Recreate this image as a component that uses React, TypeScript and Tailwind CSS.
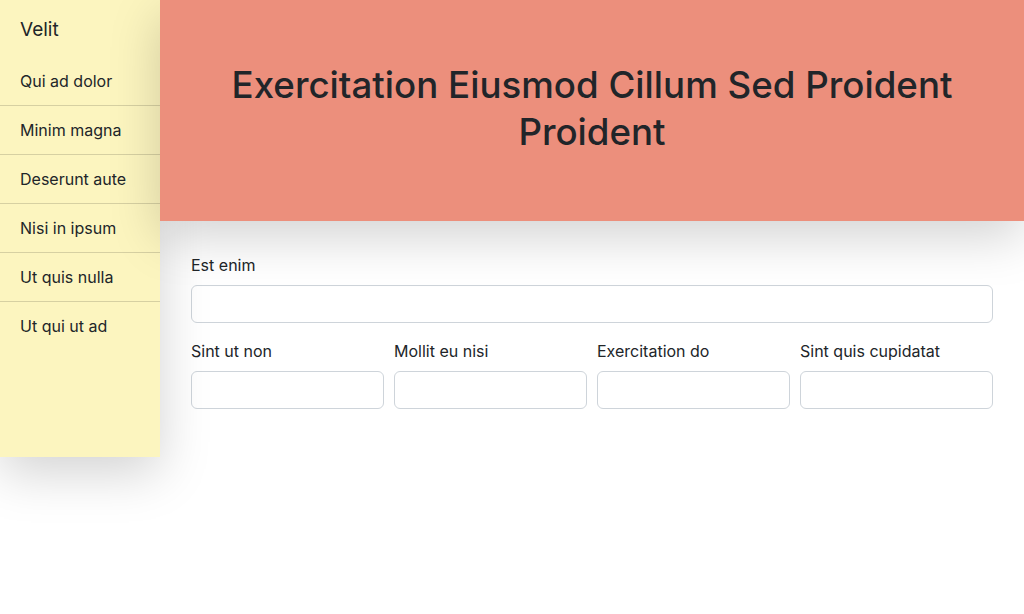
const navItems = ['Qui ad dolor', 'Minim magna', 'Deserunt aute', 'Nisi in ipsum', 'Ut quis nulla', 'Ut qui ut ad']

const smallFields = ['Sint ut non', 'Mollit eu nisi', 'Exercitation do', 'Sint quis cupidatat']

function Field({ label }: { label: string }) {
  return (
    <div className="flex flex-col">
      <label className="mb-2 text-base leading-6">{label}</label>
      <input
        type="text"
        className="h-[38px] w-full rounded-[6px] border border-[#ced4da] bg-white px-3 outline-none"
      />
    </div>
  )
}

export default function App() {
  return (
    <div
      className="flex min-h-[614px] w-full bg-white text-[#212529]"
      style={{ fontFamily: 'Inter, "Noto Sans", sans-serif' }}
    >
      <aside className="relative z-0 h-[457px] w-[160px] shrink-0 self-start bg-[#fcf5bf] shadow-[0_16px_48px_rgba(0,0,0,0.175)]">
        <div className="px-5 pt-[15px] pb-3 text-[19px] leading-[30px]">Velit</div>
        <ul>
          {navItems.map((item, i) => (
            <li
              key={item}
              className={
                i < navItems.length - 1
                  ? 'border-b border-black/15 px-5 py-3 text-base leading-6'
                  : 'px-5 py-3 text-base leading-6'
              }
            >
              {item}
            </li>
          ))}
        </ul>
      </aside>

      <main className="flex min-w-0 flex-1 flex-col">
        <header className="relative z-10 flex h-[221px] items-center justify-center bg-[#ec8f7c] px-10 pb-[6px] text-center shadow-[0_16px_48px_rgba(0,0,0,0.175)]">
          <h1 className="text-[36.7px] leading-[47px] font-medium">
            Exercitation Eiusmod Cillum Sed Proident Proident
          </h1>
        </header>

        <form className="flex flex-col gap-4 px-[31px] pt-8">
          <Field label="Est enim" />
          <div className="grid grid-cols-4 gap-[10px]">
            {smallFields.map((f) => (
              <Field key={f} label={f} />
            ))}
          </div>
        </form>
      </main>
    </div>
  )
}
